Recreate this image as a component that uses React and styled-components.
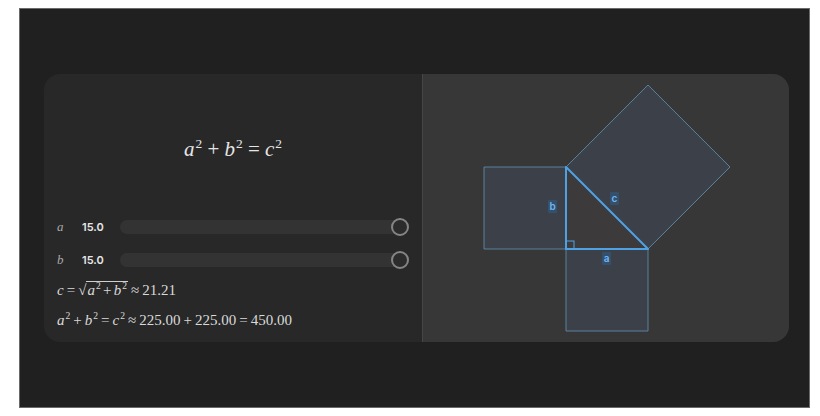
import React from "react";
import styled, { createGlobalStyle } from "styled-components";

const Global = createGlobalStyle`
  html, body { margin: 0; padding: 0; background: #ffffff; }
  body { font-family: "Inter", "Liberation Sans", sans-serif; }
`;

const Frame = styled.div`
  box-sizing: border-box;
  margin: 8px 0 0 19px;
  width: 791px;
  height: 400px;
  background: #202020;
  border: 1px solid #6a6a6a;
  padding: 65px 0 0 24px;
`;

const Card = styled.div`
  width: 745px;
  height: 268px;
  border-radius: 16px;
  overflow: hidden;
  display: grid;
  grid-template-columns: 378px 1fr;
  background: #282828;
`;

const LeftPane = styled.div`
  padding: 60px 13px 0 13px;
  display: flex;
  flex-direction: column;
  color: #dcdcdc;
`;

const RightPane = styled.div`
  background: #373737;
  border-left: 1px solid #454545;
`;

const Math = styled.span`
  font-family: "Liberation Serif", "DejaVu Serif", serif;
  font-size: ${(p) => p.size}px;
  color: ${(p) => p.color || "#dadada"};
  white-space: nowrap;
`;

const V = styled.i`
  font-style: italic;
`;

const Sup = styled.sup`
  font-size: 0.64em;
  vertical-align: 0.6em;
  line-height: 0;
  margin-left: 1px;
  font-style: normal;
`;

const Op = styled.span`
  margin: 0 ${(p) => p.sp || 0.25}em;
`;

const FormulaBlock = styled.div`
  height: 30px;
  line-height: 30px;
  text-align: center;
  margin-bottom: 51px;
`;

const SliderRow = styled.div`
  display: flex;
  align-items: center;
  height: 24px;
  margin-bottom: ${(p) => p.mb || 0}px;
`;

const VarLabel = styled.span`
  width: 25px;
  font-family: "Liberation Serif", "DejaVu Serif", serif;
  font-style: italic;
  font-size: 13px;
  color: #a8a8a8;
`;

const Value = styled.span`
  width: 38px;
  font-family: "Inter", "Liberation Sans", sans-serif;
  font-weight: 600;
  font-size: 11px;
  color: #e6e6e6;
`;

const Track = styled.div`
  position: relative;
  flex: 1;
  height: 14px;
  border-radius: 7px;
  background: #333333;
`;

const Thumb = styled.div`
  position: absolute;
  top: 50%;
  width: 14px;
  height: 14px;
  margin-top: -9px;
  border-radius: 50%;
  border: 2px solid #858585;
  background: #2c2c2c;
`;

const ResultLine = styled.div`
  height: 30px;
  line-height: 30px;
  margin-top: ${(p) => p.mt || 0}px;
`;

const Sqrt = styled.span`
  display: inline-block;
  border-top: 1px solid #cfcfcf;
  line-height: 1.1;
  padding: 0 1px;
`;

const Slider = ({ name, value, min, max, mb }) => {
  const frac = (value - min) / (max - min);
  return (
    <SliderRow mb={mb}>
      <VarLabel>{name}</VarLabel>
      <Value>{value.toFixed(1)}</Value>
      <Track>
        <Thumb style={{ left: `calc((100% - 18px) * ${frac})` }} />
      </Track>
    </SliderRow>
  );
};

const Diagram = () => {
  const A = [143, 175];
  const B = [143, 93];
  const C = [225, 175];
  const sq = "#3c4049";
  const sqStroke = "#58809f";
  return (
    <svg width="367" height="268" viewBox="0 0 367 268">
      <polygon points="61,93 143,93 143,175 61,175" fill={sq} stroke={sqStroke} strokeWidth="1" />
      <polygon points="143,175 225,175 225,257 143,257" fill={sq} stroke={sqStroke} strokeWidth="1" />
      <polygon points="143,93 225,175 307,93 225,11" fill={sq} stroke={sqStroke} strokeWidth="1" />
      <polygon
        points={`${A.join(",")} ${B.join(",")} ${C.join(",")}`}
        fill="#3d3a3b"
        stroke="#4ea2e4"
        strokeWidth="2"
        strokeLinejoin="round"
      />
      <rect x="143" y="167" width="8" height="8" fill="none" stroke="#4ea2e4" strokeWidth="1" />
      <g fontFamily="Inter, 'Liberation Sans', sans-serif" fontSize="10" fontWeight="600" textAnchor="middle">
        <rect x="125" y="126" width="9" height="13" rx="1" fill="#34506c" />
        <text x="129.5" y="136" fill="#6fb6f2">b</text>
        <rect x="187" y="118" width="9" height="13" rx="1" fill="#34506c" />
        <text x="191.5" y="128" fill="#6fb6f2">c</text>
        <rect x="179" y="178" width="9" height="13" rx="1" fill="#34506c" />
        <text x="183.5" y="188" fill="#6fb6f2">a</text>
      </g>
    </svg>
  );
};

export default function App() {
  return (
    <>
      <Global />
      <Frame>
        <Card>
          <LeftPane>
            <FormulaBlock>
              <Math size={21} color="#e6e6e6">
                <V>a</V>
                <Sup>2</Sup>
                <Op>+</Op>
                <V>b</V>
                <Sup>2</Sup>
                <Op>=</Op>
                <V>c</V>
                <Sup>2</Sup>
              </Math>
            </FormulaBlock>
            <Slider name="a" value={15} min={1} max={15} mb={9} />
            <Slider name="b" value={15} min={1} max={15} />
            <ResultLine mt={2}>
              <Math size={15}>
                <V>c</V>
                <Op sp={0.2}>=</Op>
                √<Sqrt>
                  <V>a</V>
                  <Sup>2</Sup>
                  <Op sp={0.15}>+</Op>
                  <V>b</V>
                  <Sup>2</Sup>
                </Sqrt>
                <Op sp={0.2}>≈</Op>
                21.21
              </Math>
            </ResultLine>
            <ResultLine>
              <Math size={15}>
                <V>a</V>
                <Sup>2</Sup>
                <Op sp={0.2}>+</Op>
                <V>b</V>
                <Sup>2</Sup>
                <Op sp={0.2}>=</Op>
                <V>c</V>
                <Sup>2</Sup>
                <Op sp={0.2}>≈</Op>
                225.00
                <Op sp={0.2}>+</Op>
                225.00
                <Op sp={0.2}>=</Op>
                450.00
              </Math>
            </ResultLine>
          </LeftPane>
          <RightPane>
            <Diagram />
          </RightPane>
        </Card>
      </Frame>
    </>
  );
}
